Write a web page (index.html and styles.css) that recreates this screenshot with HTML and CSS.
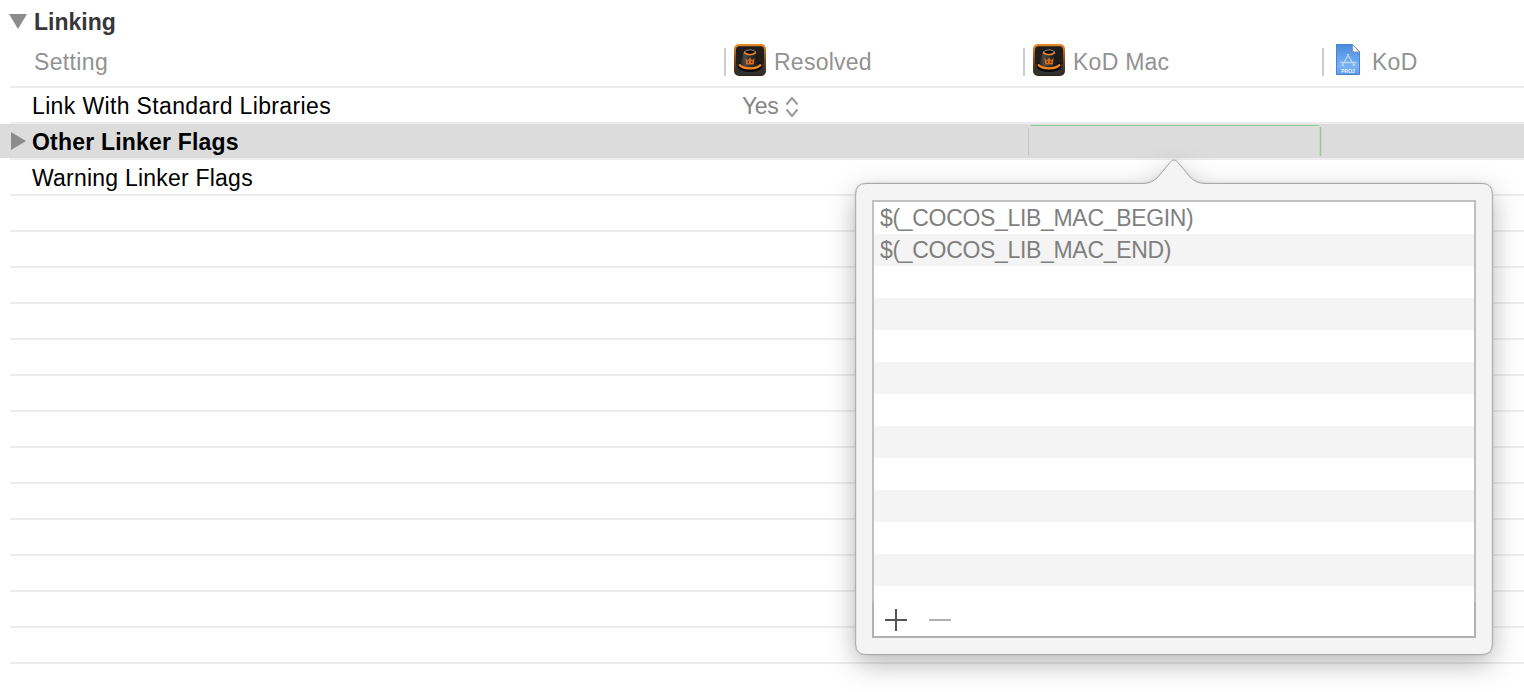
FILE: index.html
```html
<!DOCTYPE html>
<html lang="en">
<head>
<meta charset="utf-8">
<title>Build Settings</title>
<link rel="stylesheet" href="styles.css">
</head>
<body>
<svg width="0" height="0" class="defs" aria-hidden="true">
  <defs>
    <linearGradient id="rim" x1="0" y1="0" x2="0" y2="1"><stop offset="0" stop-color="#e88d25"/><stop offset=".45" stop-color="#8a4d1c"/><stop offset="1" stop-color="#30200f"/></linearGradient>
    <linearGradient id="hat" x1="0" y1="0" x2="1" y2="0"><stop offset="0" stop-color="#1a1a1a"/><stop offset=".25" stop-color="#4a4a4a"/><stop offset=".6" stop-color="#2a2a2a"/><stop offset="1" stop-color="#101010"/></linearGradient>
    <linearGradient id="doc" x1="0" y1="0" x2="0" y2="1"><stop offset="0" stop-color="#4b8be0"/><stop offset=".75" stop-color="#79b2f3"/><stop offset="1" stop-color="#5a9ae8"/></linearGradient>
    <symbol id="app" viewBox="0 0 32 32">
      <rect width="32" height="32" rx="5" fill="url(#rim)"/>
      <rect x="2" y="2.200" width="28" height="28.600" rx="3.500" fill="#201e1d"/>
      <path d="M2 20H30V28Q30 31 27 31H5Q2 31 2 28Z" fill="#30302f"/>
      <ellipse cx="16" cy="22" rx="12.500" ry="6" fill="#090909"/>
      <path d="M9.500 8Q16 12 22.500 8Q24 15 26.500 21Q16 27 5.500 21Q8 15 9.500 8Z" fill="url(#hat)"/>
      <ellipse cx="16" cy="8" rx="6" ry="2.700" fill="#090909"/>
      <path d="M10 8Q16 3.500 22 8" fill="none" stroke="#a39a92" stroke-width=".9"/>
      <path d="M10 8.500Q16 13 22 8.500" fill="none" stroke="#ef801f" stroke-width="1.600"/>
      <path d="M5 20.500Q8 24.300 16 24.300Q24 24.300 27 20.500" fill="none" stroke="#f5861e" stroke-width="2.200"/>
      <path d="M11.500 14L14 16.500L16 13.500L18 16.500L20.500 14L19.800 20.500H12.200Z" fill="#d66b19"/>
      <path d="M14.300 17V19M17.700 17V19" stroke="#43250f" stroke-width="1"/>
    </symbol>
  </defs>
</svg>
<main class="settings">
  <h1 class="group">
    <svg class="group-arrow" width="18" height="15" viewBox="0 0 18 15"><path d="M0 0H18L9 15Z" fill="#8c8c8c"/></svg>
    <span>Linking</span>
  </h1>
  <div class="columns">
    <span class="col-setting">Setting</span>
    <span class="col"><svg class="app" width="32" height="32"><use href="#app"/></svg>Resolved</span>
    <span class="col"><svg class="app" width="32" height="32"><use href="#app"/></svg>KoD Mac</span>
    <span class="col"><svg class="doc" width="24" height="32" viewBox="0 0 24 32">
      <path d="M.5.500H16.500L23.500 8V30.500H.5Z" fill="url(#doc)" stroke="#4a83cf"/>
      <path d="M16.500.500L23.500 8H18Q16.500 7.500 16.500 6Z" fill="#f5f6f8" stroke="#7b8797" stroke-width=".7"/>
      <path d="M12.800 10L6 22M11.200 10L18.500 22M4 18.500H20.500M8 22L6 20M17 22L19 20" fill="none" stroke="#b7d4f8" stroke-width="1.400"/>
      <text x="12" y="28.800" class="doc-label">PROJ</text>
    </svg>KoD</span>
  </div>
  <div class="row">
    <span class="name">Link With Standard Libraries</span>
    <span class="value">Yes <svg width="14" height="22" viewBox="0 0 14 22"><path d="M1.500 8.500L7 2L12.500 8.500M1.500 13.500L7 20L12.500 13.500" fill="none" stroke="#999" stroke-width="2"/></svg></span>
  </div>
  <div class="row selected">
    <svg class="row-arrow" width="15" height="18" viewBox="0 0 15 18"><path d="M0 0V18L15 9Z" fill="#8c8c8c"/></svg>
    <span class="name">Other Linker Flags</span>
    <svg class="edit" width="294" height="34" viewBox="0 0 294 34" fill="none"><path d="M3 1.500H291" stroke="#91cb9a"/><path d="M.5 4V31" stroke="#abd3af"/><path d="M292.500 3V32" stroke="#91cb9a" stroke-width="1.500"/></svg>
  </div>
  <div class="row warning"><span class="name">Warning Linker Flags</span></div>
  <div class="row"></div><div class="row"></div><div class="row"></div><div class="row"></div><div class="row"></div>
  <div class="row"></div><div class="row"></div><div class="row"></div><div class="row"></div><div class="row"></div>
  <div class="row"></div><div class="row"></div><div class="row"></div>
</main>
<section class="popover">
  <svg class="bubble" width="636" height="496" viewBox="0 0 636 496">
    <path d="M10 24.500H287Q296 24.500 302 18L314.500 3Q318 -1 321.500 3L334 18Q340 24.500 349 24.500H626Q636.300 24.500 636.300 35V485Q636.300 495.500 626 495.500H10Q-.3 495.500 -.3 485V35Q-.3 24.500 10 24.500Z" fill="#f4f4f4" stroke="#a9a9a9"/>
  </svg>
  <div class="list">
    <div class="item">$(_COCOS_LIB_MAC_BEGIN)</div>
    <div class="item">$(_COCOS_LIB_MAC_END)</div>
    <div class="item"></div><div class="item"></div><div class="item"></div><div class="item"></div><div class="item"></div>
    <div class="item"></div><div class="item"></div><div class="item"></div><div class="item"></div><div class="item"></div>
  </div>
  <div class="tools">
    <svg width="22" height="22" viewBox="0 0 22 22"><path d="M0 11H22M11 0V22" stroke="#555557" stroke-width="2"/></svg>
    <svg width="22" height="22" viewBox="0 0 22 22"><path d="M0 11H22" stroke="#b1b1b1" stroke-width="2"/></svg>
  </div>
</section>
</body>
</html>
```
FILE: styles.css
```css
* { box-sizing: border-box; }
body {
  margin: 0;
  width: 1524px;
  height: 692px;
  overflow: hidden;
  position: relative;
  background: #fff;
  font: 23px "Liberation Sans", Arial, sans-serif;
  color: #000;
}
svg { display: block; flex: none; }
.defs { position: absolute; }
.group {
  display: flex;
  align-items: flex-start;
  gap: 7px;
  height: 40px;
  margin: 0;
  padding: 0 0 0 9px;
  font-size: 23px;
  line-height: 44px;
  color: #37373a;
}
.group-arrow { margin-top: 14px; }
.columns {
  display: grid;
  grid-template-columns: 714px 299px 299px 1fr;
  align-items: center;
  height: 48px;
  margin-left: 10px;
  padding-bottom: 2px;
  border-bottom: 2px solid #ededed;
  color: #929292;
  letter-spacing: .25px;
}
.col-setting { padding-left: 24px; letter-spacing: .35px; }
.col {
  display: flex;
  align-items: center;
  height: 28px;
  border-left: 2px solid #ccc;
}
.app { margin: -4px 8px 0; }
.doc { margin: -4px 12px 0; }
.doc-label {
  font: bold 5px "Liberation Sans", Arial, sans-serif;
  letter-spacing: 0;
  text-anchor: middle;
  fill: #e9f3ff;
}
.row {
  display: flex;
  height: 36px;
  margin-left: 10px;
  border-bottom: 2px solid #ededed;
  line-height: 36px;
  letter-spacing: .36px;
}
.warning { letter-spacing: .22px; }
.name { width: 710px; padding-left: 22px; white-space: nowrap; }
.value {
  display: flex;
  gap: 7px;
  padding-left: 22px;
  letter-spacing: -.4px;
  color: #858585;
}
.value svg { margin-top: 8px; }
.selected {
  position: relative;
  background: #dcdcdc;
  font-weight: bold;
  letter-spacing: .2px;
}
.selected::before {
  content: "";
  position: absolute;
  left: -10px;
  top: 0;
  width: 10px;
  height: 34px;
  background: #dcdcdc;
}
.row-arrow { margin: 8px -16px 0 1px; }
.edit { margin-left: 308px; }
.popover {
  position: absolute;
  left: 856px;
  top: 159px;
  width: 636px;
  height: 496px;
  padding: 41px 16px 17px;
}
.bubble {
  position: absolute;
  left: 0;
  top: 0;
  overflow: visible;
  filter: drop-shadow(0 9px 14px rgba(0, 0, 0, .25)) drop-shadow(0 0 1px rgba(0, 0, 0, .15));
}
.list {
  position: relative;
  height: 402px;
  border: 2px solid #c0c0c0;
  border-bottom: 0;
  background: #fff;
}
.item {
  height: 32px;
  padding-left: 6px;
  line-height: 32px;
  letter-spacing: -.32px;
  color: #7f7f7f;
}
.item:nth-child(even) { background: #f4f4f4; }
.tools {
  position: relative;
  display: flex;
  gap: 22px;
  height: 36px;
  padding: 7px 11px;
  border: 2px solid #b1b1b1;
  border-top: 0;
  background: #fff;
}
```
